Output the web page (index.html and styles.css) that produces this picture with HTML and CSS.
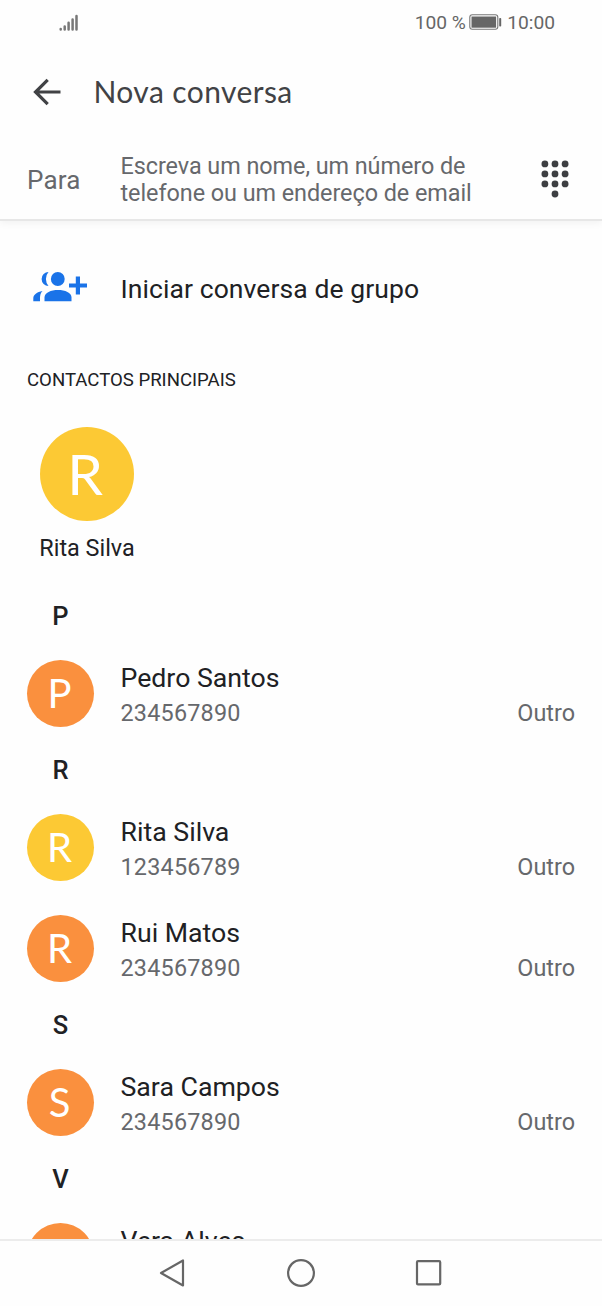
FILE: index.html
```html
<!DOCTYPE html>
<html lang="pt">
<head>
<meta charset="utf-8">
<title>Nova conversa</title>
<link rel="stylesheet" href="styles.css">
</head>
<body>
<div class="screen">
  <header class="top">
    <div class="status">
      <svg class="signal" width="20" height="18" viewBox="0 0 20 18" stroke="#777" stroke-width="2.500" stroke-linecap="round"><path d="M2.700 15.500v-.5M6.700 15.500v-3M10.600 15.500V8.800M14.600 15.500V5.500M18.500 15.500V2"/></svg>
      <div class="status-right">
        <span class="percent">100 %</span>
        <svg class="battery" width="33" height="17" viewBox="0 0 33 17"><rect x=".8" y=".8" width="28" height="14.500" rx="2.500" fill="none" stroke="#777" stroke-width="1.100"/><rect x="2.500" y="2.500" width="24.600" height="11.200" fill="#666"/><rect x="30.200" y="4" width="2" height="8.500" rx=".8" fill="#666"/></svg>
        <span class="clock">10:00</span>
      </div>
    </div>
    <div class="appbar">
      <svg class="back" width="28" height="28" viewBox="0 0 28 28" fill="none" stroke="#414245" stroke-width="3.200"><path d="M27.500 14H3M14.700 1.800L2.500 14l12.200 12.200"/></svg>
      <h1 class="title">Nova conversa</h1>
    </div>
    <div class="recipient">
      <span class="to">Para</span>
      <div class="hint"><div class="hint-a">Escreva um nome, um número de</div><div class="hint-b">telefone ou um endereço de email</div></div>
      <svg class="dialpad" width="28" height="38" viewBox="0 0 28 38" fill="#3d3f42"><circle cx="3.900" cy="3.900" r="3.400"/><circle cx="14" cy="3.900" r="3.400"/><circle cx="24.100" cy="3.900" r="3.400"/><circle cx="3.900" cy="13.900" r="3.400"/><circle cx="14" cy="13.900" r="3.400"/><circle cx="24.100" cy="13.900" r="3.400"/><circle cx="3.900" cy="23.900" r="3.400"/><circle cx="14" cy="23.900" r="3.400"/><circle cx="24.100" cy="23.900" r="3.400"/><circle cx="14" cy="34" r="3.400"/></svg>
    </div>
  </header>
  <main class="content">
    <div class="group">
      <svg class="group-icon" width="55" height="30" viewBox="0 0 55 30" fill="#1a73e8"><circle cx="24.800" cy="7" r="6.900"/><path d="M15.500.1A6.900 6.900 0 1 0 15.500 13.900A10.500 10.500 0 0 1 15.500.1Z"/><path d="M11.500 29.300V25.500C11.500 20.500 18 18 25 18s13.500 2.500 13.500 7.500v3.800Z"/><path d="M.3 29.300V26.500C.3 22.500 4 20 9.500 19C7.500 21 7 23.500 7 26v3.300ZM42.800 4.600h4.200v6.800h7v4.200h-7v7h-4.200v-7H36v-4.200h6.800Z"/></svg>
      <span class="group-label">Iniciar conversa de grupo</span>
    </div>
    <h2 class="section">CONTACTOS PRINCIPAIS</h2>
    <div class="favorite"><div class="avatar big yellow">R</div><div class="favorite-name">Rita Silva</div></div>
    <div class="letter">P</div>
    <div class="row"><div class="avatar orange">P</div><div class="info"><div class="name">Pedro Santos</div><div class="phone">234567890</div></div><span class="kind">Outro</span></div>
    <div class="letter">R</div>
    <div class="row"><div class="avatar yellow">R</div><div class="info"><div class="name">Rita Silva</div><div class="phone">123456789</div></div><span class="kind">Outro</span></div>
    <div class="row"><div class="avatar orange">R</div><div class="info"><div class="name">Rui Matos</div><div class="phone">234567890</div></div><span class="kind">Outro</span></div>
    <div class="letter">S</div>
    <div class="row"><div class="avatar orange">S</div><div class="info"><div class="name">Sara Campos</div><div class="phone">234567890</div></div><span class="kind">Outro</span></div>
    <div class="letter">V</div>
    <div class="row"><div class="avatar orange"></div><div class="info"><div class="name">Vera Alves</div></div></div>
  </main>
  <nav class="nav">
    <svg width="28" height="30" viewBox="0 0 28 30" fill="none" stroke="#666" stroke-width="2.200" stroke-linejoin="round"><path d="M24 2.500v25L2 15Z"/></svg>
    <svg width="30" height="30" viewBox="0 0 30 30" fill="none" stroke="#666" stroke-width="2.200"><circle cx="15" cy="15" r="12.900"/></svg>
    <svg width="28" height="28" viewBox="0 0 28 28" fill="none" stroke="#666" stroke-width="2.200"><rect x="2" y="2.200" width="23.200" height="23.200" rx="1"/></svg>
  </nav>
</div>
</body>
</html>
```
FILE: styles.css
```css
* { box-sizing: border-box; }
body { margin: 0; background: #fefefe; font-family: Roboto, sans-serif; color: #202124; }
.screen { width: 602px; height: 1306px; display: flex; flex-direction: column; overflow: hidden; }
.top { height: 221px; flex: none; border-bottom: 2px solid #e7e7e7; box-shadow: 0 2px 8px rgba(0,0,0,.055); }
.status { height: 46px; display: flex; justify-content: space-between; align-items: center; padding: 0 47px 0 58px; color: #666; }
.status-right { display: flex; align-items: center; padding-bottom: 1px; font-size: 19.200px; }
.percent { width: 54.500px; white-space: nowrap; }
.clock { margin-left: 5px; }
.appbar { height: 92px; display: flex; align-items: center; padding-left: 33px; }
.title { margin: 0 0 0 32.500px; padding-bottom: 2px; font: 400 30px/40px Lato, sans-serif; color: #414245; letter-spacing: .4px; }
.recipient { height: 81px; display: flex; align-items: center; padding: 2px 33px 0 27px; color: #66686c; }
.to { width: 93.500px; font-size: 26px; letter-spacing: .2px; padding-top: 1px; }
.hint { flex: 1; padding-top: 1px; font-size: 23.400px; line-height: 27.500px; letter-spacing: -.05px; white-space: nowrap; }
.dialpad { margin-bottom: 2px; }
.content { flex: 1; min-height: 0; overflow: hidden; }
.group { height: 137px; display: flex; align-items: center; padding: 0 0 6px 33px; }
.group-label { margin-left: 32.500px; font-size: 26.500px; letter-spacing: .08px; padding-top: 3px; }
.section { margin: 0; padding: 11px 0 0 27px; height: 69px; font-size: 18.600px; line-height: 22px; font-weight: 400; }
.favorite { height: 163px; width: 174px; display: flex; flex-direction: column; align-items: center; }
.avatar { width: 67px; height: 67px; flex: none; border-radius: 50%; display: flex; align-items: center; justify-content: center; padding: 0 1px 2px 0; color: #fff; font-family: Lato, sans-serif; font-size: 40px; line-height: 1; }
.big { width: 94px; height: 94px; font-size: 57px; padding: 0 4px 2px 0; }
.yellow { background: #fcc934; }
.orange { background: #fa903e; }
.favorite-name { margin-top: 13px; font-size: 23.400px; line-height: 28px; }
.letter { height: 53px; width: 121px; display: flex; align-items: center; justify-content: center; padding-bottom: 1px; font-size: 25.500px; font-weight: 500; }
.row { height: 101px; display: flex; align-items: center; padding: 0 27px 0 26.500px; }
.info { flex: 1; padding-left: 27px; height: 67px; }
.name { font-size: 26.700px; line-height: 34px; padding-top: 1px; }
.phone { font-size: 23.400px; line-height: 32px; padding-top: 2px; letter-spacing: .2px; color: #66686c; }
.kind { font-size: 23.400px; padding-top: 38px; color: #66686c; }
.nav { flex: none; height: 67px; border-top: 2px solid #ececec; display: flex; align-items: center; justify-content: space-between; padding: 0 159px 2px; }
```
